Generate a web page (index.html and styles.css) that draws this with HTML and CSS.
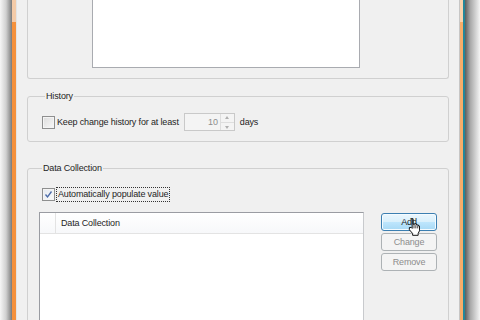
FILE: index.html
```html
<!DOCTYPE html>
<html lang="en">
<head>
  <meta charset="UTF-8" />
  <title>Options</title>
  <link rel="stylesheet" href="styles.css">
</head>
<body>

<div class="shadow-left"></div>
<div class="frame-left"></div>

<div class="dialog">
  <div class="group-top">
    <div class="preview-box"></div>
  </div>

  <fieldset class="group history">
    <legend>History</legend>
    <div class="row">
      <span class="checkbox"></span>
      <label>Keep change history for at least</label>
      <div class="spinner">
        <span class="spin-value">10</span>
        <span class="spin-buttons">
          <span class="spin-up"></span>
          <span class="spin-down"></span>
        </span>
      </div>
      <span class="unit">days</span>
    </div>
  </fieldset>

  <fieldset class="group data">
    <legend>Data Collection</legend>
    <div class="row check-row">
      <span class="checkbox checked">
        <svg width="11" height="11" viewBox="0 0 11 11"><path d="M2.5 5.5 L4.5 8 L8.5 2.5" fill="none" stroke="#4a6aa8" stroke-width="1.3"/></svg>
      </span>
      <label class="focused">Automatically populate value</label>
    </div>
    <div class="list-area">
      <div class="listview">
        <div class="list-header">
          <span class="col-first"></span>
          <span class="col-name">Data Collection</span>
        </div>
      </div>
      <div class="buttons">
        <button class="btn hot">Add
          <svg class="cursor" width="12" height="18" viewBox="0 0 13 19">
            <path d="M3.5 0.5 h2 v6 h1.5 v-0.5 h2 v1 h1 v0.5 h1.5 v1 h1 v5 l-1.5 3 v2 h-6 v-2 l-3.5 -4 v-2.5 h2 l1 1 v-9.5 z" fill="#fff" stroke="#000" stroke-width="1"/>
            <path d="M6.5 7 v4 M8.5 7.5 v3.5 M10.5 8.5 v2.5" stroke="#000" stroke-width="0.8"/>
          </svg>
        </button>
        <button class="btn" disabled>Change</button>
        <button class="btn" disabled>Remove</button>
      </div>
    </div>
  </fieldset>
</div>

<div class="frame-right"></div>
<div class="frame-teal"></div>
<div class="shadow-right"></div>

</body>
</html>
```

FILE: styles.css
```css
body {
  margin: 0;
  width: 480px;
  height: 320px;
  overflow: hidden;
  display: flex;
  font-family: "Liberation Sans", Arial, sans-serif;
  font-size: 9px;
  letter-spacing: -0.15px;
  color: #1e1e1e;
  background: #f0f0f0;
}
.shadow-left {
  width: 12px;
  background: linear-gradient(to right, #f6f6f6, #d0d0d0 50%, #7a7a7a);
}
.frame-left {
  width: 4px;
  background: linear-gradient(to bottom, #f4cba8 0, #f4cba8 22px, #f5913c 22px);
}
.dialog {
  width: 444px;
  height: 320px;
  overflow: hidden;
  box-sizing: border-box;
  border-left: 1px solid #e4e4e4;
  border-right: 1px solid #c6c6c6;
  padding: 0 10px;
  background: #f0f0f0;
}
.frame-right {
  width: 3px;
  background: linear-gradient(to bottom, #f9d3ae 0, #f9d3ae 22px, #f7ad69 22px);
}
.frame-teal {
  width: 2px;
  background: #23879a;
}
.shadow-right {
  width: 15px;
  background: linear-gradient(to right, #5e5e5e, #a8a8a8 35%, #f4f4f4);
}

.group-top {
  height: 79px;
  box-sizing: border-box;
  border: 1px solid #d0d0d0;
  border-top: none;
  border-radius: 0 0 3px 3px;
}
.preview-box {
  margin-left: 64px;
  width: 268px;
  height: 68px;
  box-sizing: border-box;
  background: #fff;
  border: 1px solid #a9abb0;
  border-top: none;
}

.group {
  margin: 0;
  border: 1px solid #d0d0d0;
  border-radius: 3px;
  min-width: 0;
}
.group legend {
  padding: 0 1px;
  margin-left: 3px;
  line-height: 12px;
}
.history {
  margin-top: 11px;
  padding: 11px 10px 10px 14px;
}
.data {
  margin-top: 20px;
  padding: 13px 10px 0 11px;
  height: 150px;
}

.row {
  display: flex;
  align-items: center;
}
.checkbox {
  width: 13px;
  height: 13px;
  box-sizing: border-box;
  border: 1px solid #8e8f8f;
  background: linear-gradient(135deg, #dcdcdc, #f8f8f8);
  box-shadow: inset 0 0 0 1px #f4f4f4;
  margin-right: 2px;
  display: flex;
  align-items: center;
  justify-content: center;
}
.checkbox.checked {
  background: linear-gradient(135deg, #e4e9f0, #fbfbfb);
}
.spinner {
  margin-left: 5px;
  width: 51px;
  height: 18px;
  box-sizing: border-box;
  border: 1px solid #c9c9c9;
  background: #f4f4f4;
  display: flex;
  color: #8d8d8d;
}
.spin-value {
  flex: 1;
  text-align: right;
  line-height: 16px;
  padding-right: 2px;
}
.spin-buttons {
  width: 13px;
  display: flex;
  flex-direction: column;
  border-left: 1px solid #dedede;
}
.spin-up, .spin-down {
  flex: 1;
  position: relative;
}
.spin-up { border-bottom: 1px solid #dedede; }
.spin-up::after, .spin-down::after {
  content: "";
  position: absolute;
  left: 4px;
  top: 2px;
  border-left: 2.5px solid transparent;
  border-right: 2.5px solid transparent;
}
.spin-up::after { border-bottom: 3px solid #b0b0b0; }
.spin-down::after { border-top: 3px solid #b0b0b0; top: 3px; }
.unit {
  margin-left: 5px;
}

.check-row {
  margin-left: 3px;
  height: 14px;
}
.focused {
  outline: 1px dotted #333;
  padding: 0 1px;
  line-height: 13px;
}

.list-area {
  display: flex;
  margin-top: 11px;
}
.listview {
  width: 325px;
  height: 130px;
  box-sizing: border-box;
  border: 1px solid #9a9ca2;
  border-right-color: #c8cacd;
  border-bottom: none;
  background: #fff;
}
.list-header {
  display: flex;
  height: 20px;
  border-bottom: 1px solid #e3e3e3;
  background: linear-gradient(to bottom, #ffffff, #f7f8fa);
}
.col-first {
  width: 15px;
  border-right: 1px solid #e3e3e3;
}
.col-name {
  padding-left: 5px;
  line-height: 20px;
}

.buttons {
  margin-left: 17px;
  margin-top: 1px;
  display: flex;
  flex-direction: column;
  gap: 2px;
}
.btn {
  width: 56px;
  height: 18px;
  padding: 0;
  font-family: inherit;
  font-size: 9px;
  letter-spacing: inherit;
  border: 1px solid #adb2b5;
  border-radius: 3px;
  background: #f4f4f4;
  color: #8d8d8d;
}
.btn.hot {
  position: relative;
  color: #1e1e1e;
  border-color: #3c7fb1;
  background: linear-gradient(to bottom, #eaf6fd 0%, #d9f0fc 50%, #bee6fd 50%, #a7d9f5 100%);
  box-shadow: inset 0 0 0 1px #f4fbff;
}
.cursor {
  position: absolute;
  left: 26px;
  top: 4px;
}
```
